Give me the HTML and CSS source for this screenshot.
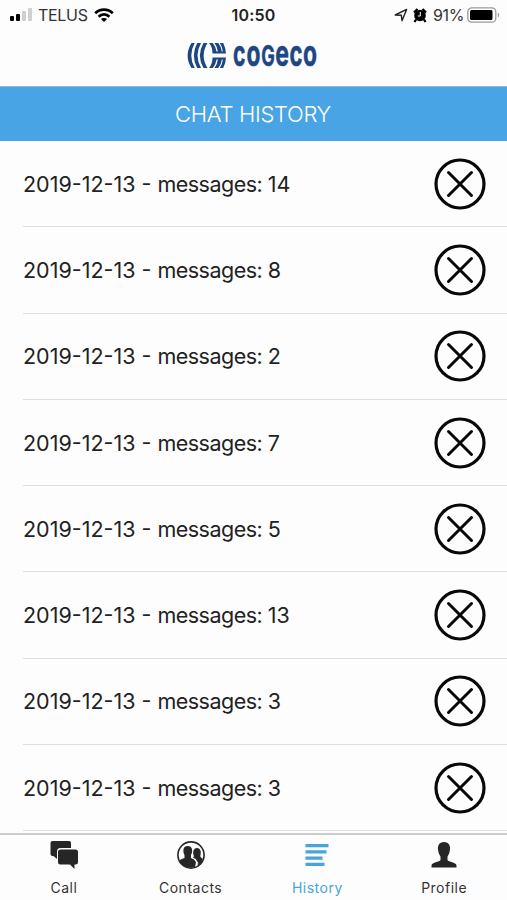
FILE: index.html
```html
<!DOCTYPE html>
<html lang="en">
<head>
<meta charset="utf-8">
<title>Chat History</title>
<link rel="stylesheet" href="styles.css">
</head>
<body>
<svg width="0" height="0" class="defs"><defs>
<symbol id="close" viewBox="0 0 52 52"><circle cx="26" cy="26" r="24" fill="none" stroke="#080808" stroke-width="3.200"/><path d="M14.500 14.500 37.500 37.500M37.500 14.500 14.500 37.500" stroke="#080808" stroke-width="3" stroke-linecap="round"/></symbol>
</defs></svg>
<header class="status">
<div class="side left">
<svg width="24" height="14" viewBox="0 0 24 14"><rect x="1" y="8" width="4" height="5" rx="1"/><rect x="7" y="6" width="4" height="7" rx="1"/><rect x="13" y="3" width="4" height="10" rx="1" fill="#d0d0d0"/><rect x="19" y="0" width="4" height="13" rx="1" fill="#d0d0d0"/></svg>
<span class="carrier">TELUS</span>
<svg class="wifi" width="20" height="15" viewBox="0 0 20 15"><path d="M1.200 5.300C6 .5 14 .5 18.800 5.300M4.600 8.700c3-3 7.800-3 10.800 0" fill="none" stroke="#000" stroke-width="2.700"/><path d="M10 14 6.900 11.100c1.700-1.600 4.500-1.600 6.200 0z"/></svg>
</div>
<div class="time">10:50</div>
<div class="side right">
<svg width="14" height="14" viewBox="0 0 14 14"><path d="M1.200 7 12.600 1.400 8 12.700 7.300 7.200z" fill="none" stroke="#222" stroke-width="1.400" stroke-linejoin="round"/></svg>
<svg class="alarm" width="14" height="15" viewBox="0 0 14 15"><circle cx="7" cy="7.500" r="5.800"/><path d="M1 4.500 4.500 1M9.500 1 13 4.500M3 11.500 1.500 14M11 11.500 12.500 14" stroke="#000" stroke-width="2.300"/><path d="M7.300 4v4H4.800" fill="none" stroke="#fff" stroke-width="1"/></svg>
<span class="percent">91%</span>
<svg class="battery" width="33" height="16" viewBox="0 0 33 16"><rect x=".8" y=".8" width="28" height="14.400" rx="4" fill="#fff" stroke="#999" stroke-width="1.300"/><rect x="3" y="3" width="22.500" height="10" rx="1.500"/><path d="M30.800 5.500c1.800.8 1.800 4.200 0 5z" fill="#999"/></svg>
</div>
</header>
<div class="brand">
<svg width="40" height="25" viewBox="0 0 40 25">
<g fill="#1d4683"><path d="M4.500 0h3.200Q.8 12.500 7.700 25H4.500Q-3.300 12.500 4.500 0zM10.200 0h3.800Q7 12.500 14 25h-3.800Q3.500 12.500 10.200 0zM16.500 0h4Q12.800 12.500 20.500 25h-4Q9.200 12.500 16.500 0z"/><path d="M22 0h3.800q3.200 4 3.700 8.500h1.300Q30.500 4 27.500 0h3.800q3.200 4 3.500 8.500h1Q35.500 4 32.800 0h3.400q2.600 5 2.800 10.500H25.500Q25.500 4 22 0z"/><path d="M22 25h3.800q3.200-4 3.700-8.500h1.300Q30.500 21 27.500 25h3.800q3.200-4 3.500-8.500h1Q35.500 21 32.800 25h3.400q2.600-5 2.800-10.500H25.500Q25.500 21 22 25z"/></g>
</svg>
<svg class="word" width="84" height="48" viewBox="0 0 84 48"><text x="0" y="34.500" textLength="12.500" lengthAdjust="spacingAndGlyphs">c</text><text x="13.500" y="34.500" textLength="14" lengthAdjust="spacingAndGlyphs">o</text><text class="cap" x="28.200" y="34.500" textLength="13.500" lengthAdjust="spacingAndGlyphs">G</text><text x="42.200" y="34.500" textLength="13.700" lengthAdjust="spacingAndGlyphs">e</text><text x="56.400" y="34.500" textLength="13" lengthAdjust="spacingAndGlyphs">c</text><text x="70" y="34.500" textLength="14" lengthAdjust="spacingAndGlyphs">o</text></svg>
</div>
<h1>CHAT HISTORY</h1>
<main>
<div class="row"><p>2019-12-13 - <span>messages: </span>14</p><svg class="x"><use href="#close"/></svg></div>
<div class="row"><p>2019-12-13 - <span>messages: </span>8</p><svg class="x"><use href="#close"/></svg></div>
<div class="row"><p>2019-12-13 - <span>messages: </span>2</p><svg class="x"><use href="#close"/></svg></div>
<div class="row"><p>2019-12-13 - <span>messages: </span>7</p><svg class="x"><use href="#close"/></svg></div>
<div class="row"><p>2019-12-13 - <span>messages: </span>5</p><svg class="x"><use href="#close"/></svg></div>
<div class="row"><p>2019-12-13 - <span>messages: </span>13</p><svg class="x"><use href="#close"/></svg></div>
<div class="row"><p>2019-12-13 - <span>messages: </span>3</p><svg class="x"><use href="#close"/></svg></div>
<div class="row"><p>2019-12-13 - <span>messages: </span>3</p><svg class="x"><use href="#close"/></svg></div>
</main>
<nav>
<div class="tab"><svg viewBox="0 0 30 30"><path d="M3.500 1h16.500q2 0 2 2v5H11.500q-3.500 0-3.500 3.500V19l-3.500-3h-1q-2 0-2-2V3q0-2 2-2z"/><path d="M11.500 9.500h15q2.500 0 2.500 2.500v10q0 2.500-2.500 2.500h-1v4.500l-4.500-4.500h-9.500Q9 24.500 9 22V12q0-2.500 2.500-2.500z"/></svg><span>Call</span></div>
<div class="tab"><svg viewBox="0 0 30 30"><circle cx="15" cy="15" r="13.100" fill="none" stroke="#262626" stroke-width="1.600"/><path d="M3 21q1.500-2 5.500-3v-3C6.500 11 7 6 11.700 6s5.500 5 3.300 9v3q3.500 1 5 4l-1 5q-10 3-16-6z"/><path d="M17 17.500c1-.5 1-1.500.5-2.500-1-4 .5-7 3.500-7s4.500 3 3.500 7c-.5 1.500 0 2.500 2 3.500q1 3-4.500 7-1-5.500-5-8z"/><path d="m18.500 18.500 3.500 5" stroke="#fff" stroke-width="1.300"/></svg><span>Contacts</span></div>
<div class="tab active"><svg viewBox="0 0 30 30"><path d="M3.500 4h23v3.300h-23zM3.500 10.200h21v3.300h-21zM3.500 16.500h17v3.300h-17zM3.500 22.800h19v3.300h-19z"/></svg><span>History</span></div>
<div class="tab"><svg viewBox="0 0 30 30"><path d="M15 2c5 0 7 4 5.700 9-.4 3-1.400 4-2.200 5.500v3.500c1 2 8.500 2 9 5.500v2H2.500v-2c.5-3.500 8-3.500 9-5.500v-3.500C10.700 15 9.700 14 9.300 11 8 6 10 2 15 2z"/></svg><span>Profile</span></div>
</nav>
</body>
</html>
```

FILE: styles.css
```css
* { box-sizing: border-box; }
body { margin: 0; width: 507px; height: 900px; overflow: hidden; background: #fdfdfd; color: #222; font-family: Inter, "Liberation Sans", sans-serif; display: flex; flex-direction: column; }
.defs { position: absolute; }
.status { height: 30px; display: grid; grid-template-columns: 1fr auto 1fr; align-items: center; padding: 0 7px 0 9px; font-size: 16px; flex: none; }
.side { display: flex; align-items: center; }
.right { justify-content: flex-end; }
.carrier { margin-left: 5px; letter-spacing: -.3px; color: #333; }
.wifi { margin-left: 6px; }
.time { font-weight: 600; letter-spacing: .2px; padding-right: 2px; }
.alarm { margin-left: 5px; }
.percent { margin-left: 6px; letter-spacing: -.4px; color: #333; }
.battery { margin-left: 3px; }
.brand { height: 56px; display: flex; justify-content: center; align-items: center; gap: 6px; padding-bottom: 6px; padding-right: 4px; flex: none; }
.word { fill: #1d4683; stroke: #1d4683; stroke-width: .5; font-size: 36px; font-weight: 700; overflow: visible; }
.word .cap { font-size: 28px; }
h1 { flex: none; height: 55px; margin: 0; background: #48a4e5; border-top: 1px solid #8ebbdc; color: #fff; font-size: 22px; letter-spacing: -.3px; line-height: 54px; font-weight: 300; text-align: center; padding-right: 1px; }
main { flex: none; height: 692px; padding-top: .2px; }
.row { height: 86.25px; margin-left: 23px; padding-right: 21px; border-bottom: 1.5px solid #dfdfdf; display: flex; align-items: center; justify-content: space-between; font-size: 21.5px; }
.row p { margin: 0; white-space: pre; }
.row span { letter-spacing: -.5px; }
.x { width: 52px; height: 52px; }
nav { flex: none; height: 67px; border-top: 2px solid #ccc; background: #fdfdfd; display: grid; grid-template-columns: repeat(4, 1fr); }
.tab { display: flex; flex-direction: column; align-items: center; padding-top: 5px; padding-left: 1px; font-size: 14px; letter-spacing: .5px; color: #333; }
.tab svg { width: 30px; height: 30px; fill: #262626; }
.tab span { margin-top: 8px; line-height: 20px; }
.tab.active { color: #48a4dc; }
.active svg { fill: #48a4dc; }
```
